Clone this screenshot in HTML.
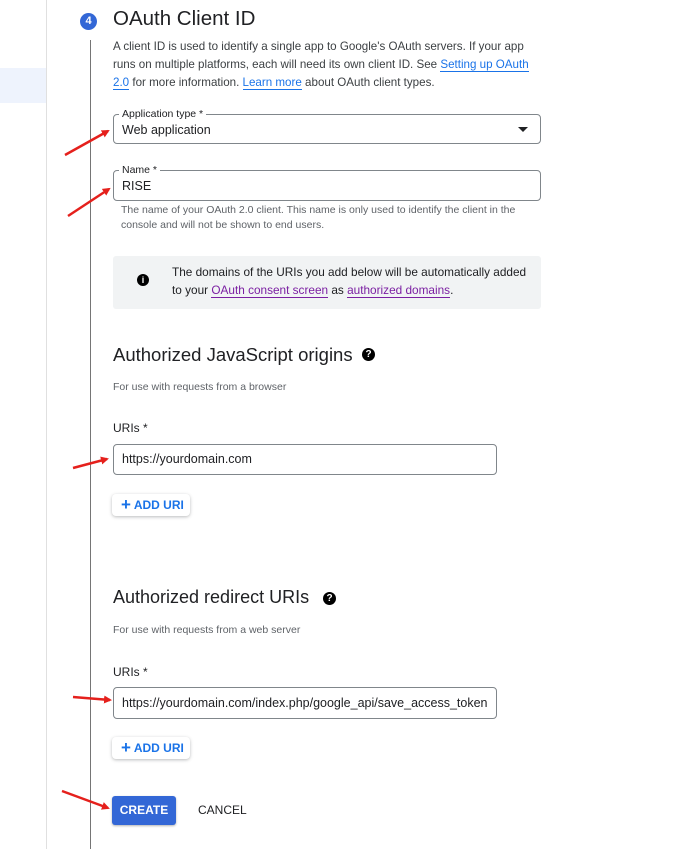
<!DOCTYPE html>
<html><head><meta charset="utf-8"><style>
*{margin:0;padding:0;box-sizing:border-box}
body{width:673px;height:849px;background:#fff;font-family:"Liberation Sans",Arial,sans-serif;color:#202124;position:relative;overflow:hidden}
.a{position:absolute}
.p{font-size:11.6px;line-height:18px;color:#3c4043}
.lnk{color:#1a73e8;border-bottom:1px solid #1a73e8}
.vl{color:#7b1fa2;border-bottom:1px solid #7b1fa2}
.box{border:1px solid #80868b;border-radius:4px;font-size:12.5px;padding-left:8px}
.lab{background:#fff;font-size:10.5px;line-height:13px;padding:0 3px;top:-7px;left:5px;color:#202124}
.btn{box-shadow:0 1px 3px rgba(60,64,67,.35);border-radius:4px;color:#1a73e8;font-size:12px;font-weight:bold;background:#fff}
h2{font-weight:normal;font-size:18.5px}
.sm{font-size:10.5px;color:#5f6368}
</style></head><body>
<div class="a" style="left:46px;top:0;width:1px;height:849px;background:#e0e0e0"></div>
<div class="a" style="left:0;top:68px;width:46px;height:35px;background:#eef3fd"></div>
<div class="a" style="left:80px;top:13px;width:17px;height:17px;border-radius:50%;background:#3367d6;color:#fff;font-size:11px;font-weight:bold;text-align:center;line-height:17px">4</div>
<div class="a" style="left:90px;top:40px;width:1px;height:809px;background:#757575"></div>
<div class="a" style="left:113px;top:7px;font-size:20.5px">OAuth Client ID</div>
<div class="a p" style="left:113px;top:38px;width:425px">A client ID is used to identify a single app to Google's OAuth servers. If your app runs on multiple platforms, each will need its own client ID. See <span class="lnk">Setting up OAuth 2.0</span> for more information. <span class="lnk">Learn more</span> about OAuth client types.</div>
<div class="a box" style="left:113px;top:114px;width:428px;height:30px;line-height:30px">Web application<span class="a lab">Application type *</span><span class="a" style="right:12px;top:12px;width:0;height:0;border-left:5px solid transparent;border-right:5px solid transparent;border-top:5px solid #202124"></span></div>
<div class="a box" style="left:113px;top:170px;width:428px;height:31px;line-height:31px">RISE<span class="a lab">Name *</span></div>
<div class="a sm" style="left:121px;top:203px;line-height:15px;width:420px">The name of your OAuth 2.0 client. This name is only used to identify the client in the console and will not be shown to end users.</div>
<div class="a" style="left:113px;top:256px;width:428px;height:53px;background:#f1f3f4;border-radius:3px"></div>
<div class="a" style="left:137px;top:274px;width:12px;height:12px;border-radius:50%;background:#000;color:#fff;font-size:9px;font-weight:bold;text-align:center;line-height:12px">i</div>
<div class="a p" style="left:172px;top:263px;color:#202124;font-size:11.8px">The domains of the URIs you add below will be automatically added<br>to your <span class="vl">OAuth consent screen</span> as <span class="vl">authorized domains</span>.</div>
<h2 class="a" style="left:113px;top:344px">Authorized JavaScript origins</h2>
<div class="a" style="left:362px;top:348px;width:13px;height:13px;border-radius:50%;background:#000;color:#fff;font-size:10px;font-weight:bold;text-align:center;line-height:13px">?</div>
<div class="a sm" style="left:113px;top:381px">For use with requests from a browser</div>
<div class="a" style="left:113px;top:421px;font-size:12px">URIs *</div>
<div class="a box" style="left:113px;top:444px;width:384px;height:31px;line-height:29px">https://yourdomain.com</div>
<div class="a btn" style="left:112px;top:494px;width:78px;height:22px;line-height:22px;padding-left:9px"><span style="font-size:17px;vertical-align:-1px">+</span> ADD URI</div>
<h2 class="a" style="left:113px;top:587px;font-size:18px">Authorized redirect URIs</h2>
<div class="a" style="left:323px;top:592px;width:13px;height:13px;border-radius:50%;background:#000;color:#fff;font-size:10px;font-weight:bold;text-align:center;line-height:13px">?</div>
<div class="a sm" style="left:113px;top:624px">For use with requests from a web server</div>
<div class="a" style="left:113px;top:665px;font-size:12px">URIs *</div>
<div class="a box" style="left:113px;top:687px;width:384px;height:32px;line-height:30px">https://yourdomain.com/index.php/google_api/save_access_token</div>
<div class="a btn" style="left:112px;top:737px;width:78px;height:22px;line-height:22px;padding-left:9px"><span style="font-size:17px;vertical-align:-1px">+</span> ADD URI</div>
<div class="a" style="left:112px;top:796px;width:64px;height:29px;background:#3367d6;border-radius:3px;color:#fff;font-size:12px;font-weight:bold;text-align:center;line-height:29px;box-shadow:0 1px 2px rgba(0,0,0,.3)">CREATE</div>
<div class="a" style="left:198px;top:796px;font-size:12px;line-height:29px">CANCEL</div>
<svg class="a" style="left:0;top:0" width="673" height="849">
<defs><marker id="m" markerWidth="8" markerHeight="8" refX="6" refY="4" orient="auto" markerUnits="userSpaceOnUse"><path d="M0,0 L8,4 L0,8z" fill="#e5201c"/></marker></defs>
<g stroke="#e5201c" stroke-width="2.5" marker-end="url(#m)">
<line x1="65" y1="155" x2="108" y2="131"/>
<line x1="68" y1="216" x2="109" y2="189"/>
<line x1="73" y1="468" x2="107" y2="459"/>
<line x1="73" y1="697" x2="110" y2="700"/>
<line x1="62" y1="791" x2="108" y2="808"/>
</g></svg>
</body></html>
